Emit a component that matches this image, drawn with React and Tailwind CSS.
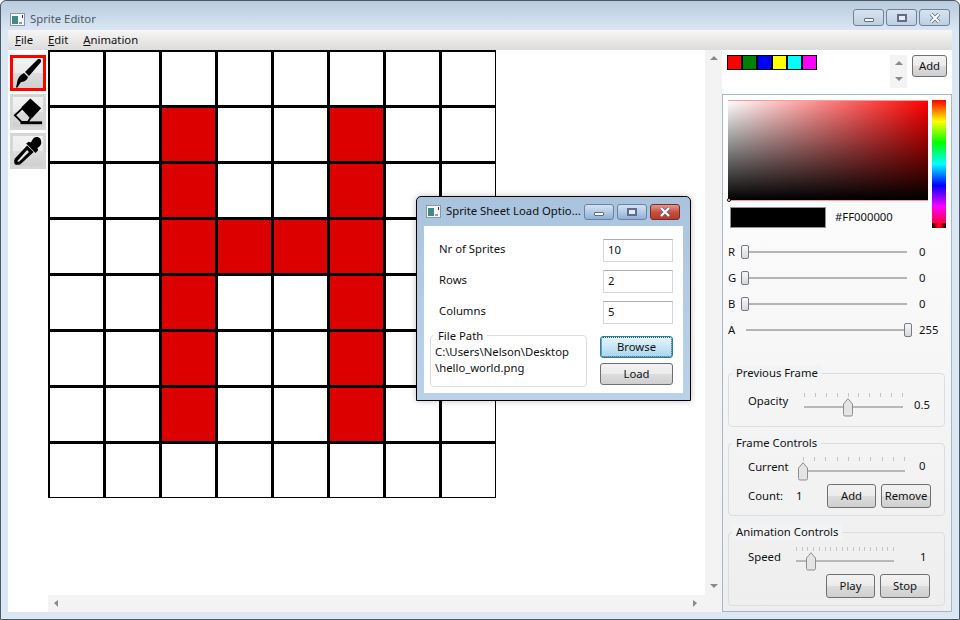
const filled = new Set([
  '1,2', '1,5', '2,2', '2,5', '3,2', '3,3', '3,4', '3,5',
  '4,2', '4,5', '5,2', '5,5', '6,2', '6,5',
])

const swatches = ['bg-[#ff0000]', 'bg-[#008000]', 'bg-[#0000ff]', 'bg-[#ffff00]', 'bg-[#00ffff]', 'bg-[#ff00ff]']

function AppIcon() {
  return (
    <svg width="15" height="13" viewBox="0 0 15 13" className="shrink-0">
      <rect x="0.5" y="0.5" width="14" height="12" fill="#f4f6f8" stroke="#8a96a4" />
      <rect x="2" y="3" width="6" height="8" fill="#3f8a86" />
      <rect x="9" y="9" width="3" height="2" fill="#8fa0b0" />
      <rect x="12" y="2" width="1" height="3" fill="#333" />
    </svg>
  )
}

function CaptionButtons({ dialog }) {
  const base = 'flex items-center justify-center border rounded-[3px] border-[#6d82a0]'
  const glass = dialog
    ? 'bg-gradient-to-b from-[#d4e2f2] via-[#b3cbe6] to-[#8fb0d6]'
    : 'bg-gradient-to-b from-[#d8e3ef] to-[#bfcfe0]'
  const size = dialog ? 'w-[30px] h-[16px]' : 'w-[31px] h-[17px]'
  return (
    <div className={`flex ${dialog ? 'gap-[3px]' : 'gap-[2px]'}`}>
      <div className={`${base} ${glass} ${size}`}>
        <div className="w-[10px] h-[4px] mt-[4px] bg-white border border-[#5d6f88] rounded-[1px]" />
      </div>
      <div className={`${base} ${glass} ${size}`}>
        <div className="w-[10px] h-[8px] border-2 border-[#5d6f88] bg-[#e6edf5]" />
      </div>
      <div
        className={`${base} ${size} ${dialog ? 'bg-gradient-to-b from-[#e09a90] via-[#c9503f] to-[#b53a2c] border-[#7a2a22]' : glass}`}
      >
        <svg width="12" height="10" viewBox="0 0 12 10">
          <path d="M2 1 L10 9 M10 1 L2 9" stroke="#5d6f88" strokeWidth="3.6" />
          <path d="M2 1 L10 9 M10 1 L2 9" stroke="#fff" strokeWidth="2" />
        </svg>
      </div>
    </div>
  )
}

function ToolButton({ active, children }) {
  return (
    <div
      className={`relative w-9 h-9 flex items-center justify-center ${
        active ? 'border-[3px] border-[#ff0000]' : 'border-[3px] border-[#d6d6d6]'
      } bg-[linear-gradient(#f2f2f2_0%,#ebebeb_50%,#dddddd_50%,#cfcfcf_100%)]`}
    >
      {children}
    </div>
  )
}

function Brush() {
  return (
    <svg width="28" height="30" viewBox="0 0 28 30">
      <path d="M26 1 L27 2 L27 4 L15 18 L11 14 L24 1 Z" fill="#000" />
      <path d="M10 15 L14 19 C13 23 9 24 7 24 L3 30 L2 29 C3 26 3 23 4 21 C5 18 8 16 10 15 Z" fill="#000" />
    </svg>
  )
}

function Eraser() {
  return (
    <svg width="32" height="30" viewBox="0 0 32 30">
      <path d="M18.5 0.7 L30 11 L20 22 L9 10 Z" fill="#000" />
      <path d="M10 11 L19 21 L16 25.5 L9 25.5 L2 18.5 Z" fill="none" stroke="#000" strokeWidth="2" />
      <rect x="8" y="25" width="23" height="3" fill="#000" />
    </svg>
  )
}

function Dropper() {
  return (
    <svg width="32" height="32" viewBox="0 0 32 32">
      <path d="M22 2 C25 0 30 1 30 6 C31 9 28 11 26 13 L27 15 L24 18 L14 8 L17 6 L19 7 Z" fill="#000" />
      <path d="M15 10 L22 17 L8 30 C6 31 3 31 2 30 C1 28 1 26 2 24 Z" fill="#000" />
      <path d="M15 15 L17 17 L7 27 C6 27.5 5 27.5 4.5 27 Z" fill="#e4e4e4" />
    </svg>
  )
}

function Arrow({ dir, className }) {
  const paths = {
    up: 'M0 5 L4 1 L8 5 Z',
    down: 'M0 1 L8 1 L4 5 Z',
    left: 'M1 3 L5 0 L5 7 Z',
    right: 'M5 3 L1 0 L1 7 Z',
  }
  return (
    <svg width="8" height="7" viewBox="0 0 8 7" className={className}>
      <path d={paths[dir]} fill="#8a8a8a" />
    </svg>
  )
}

function Grid() {
  const cells = []
  for (let r = 0; r < 8; r++) {
    for (let c = 0; c < 8; c++) {
      cells.push(
        <div key={`${r},${c}`} className={filled.has(`${r},${c}`) ? 'bg-[#dd0000]' : 'bg-white'} />
      )
    }
  }
  return (
    <div className="grid grid-cols-[repeat(8,53px)] grid-rows-[repeat(8,53px)] gap-[3px] w-[448px] h-[448px] pl-[1.5px] pt-[1.5px] bg-black">
      {cells}
    </div>
  )
}

function Button({ w, h = 'h-[24px]', focused, children }) {
  return (
    <div
      className={`${w} ${h} flex items-center justify-center rounded-[3px] border text-[11.3px] ${
        focused
          ? 'border-[#2c7ea8] bg-gradient-to-b from-[#e6f4fb] via-[#c9e6f5] to-[#a8d6ee] outline-1 outline-dotted -outline-offset-2 outline-[#33566a]'
          : 'border-[#707070] bg-[linear-gradient(#f2f2f2_0%,#ebebeb_50%,#dddddd_50%,#cfcfcf_100%)]'
      }`}
    >
      {children}
    </div>
  )
}

function ColorSlider({ label, value, pos }) {
  return (
    <div className="flex items-center h-[26px]">
      <span className="w-[13px] text-[11.3px]">{label}</span>
      <div className="relative w-[171px] h-[14px] flex items-center">
        <div className="w-full h-[2px] bg-[#b4b4b4] mx-[5px]" />
        <div
          className={`absolute top-0 ${pos} w-[8px] h-[14px] rounded-[2px] border border-[#707a88] bg-gradient-to-b from-[#f8f8f8] to-[#d8d8d8]`}
        />
      </div>
      <span className="ml-[7px] text-[11.3px]">{value}</span>
    </div>
  )
}

function Ticks({ count, className }) {
  return (
    <div className={`flex justify-between ${className}`}>
      {Array.from({ length: count }).map((_, i) => (
        <div key={i} className="w-px h-[4px] bg-[#c4c4c4]" />
      ))}
    </div>
  )
}

function TickSlider({ w, count, thumb, tickClass = '' }) {
  return (
    <div className={`relative ${w} h-[22px]`}>
      <Ticks count={count} className={tickClass} />
      <div className="absolute left-0 right-0 top-[13px] h-[2px] bg-[#b8b8b8]" />
      <svg width="10" height="19" viewBox="0 0 10 19" className={`absolute top-[5px] ${thumb}`}>
        <path
          d="M0.5 6 L5 0.7 L9.5 6 L9.5 16.5 Q9.5 18 8 18 L2 18 Q0.5 18 0.5 16.5 Z"
          fill="#e4e4e4"
          stroke="#8a8f96"
        />
      </svg>
    </div>
  )
}

function Group({ title, h, children }) {
  return (
    <div className={`relative ${h} border border-[#d5dfe5] rounded-[4px]`}>
      <span className="absolute -top-[9px] left-[3px] px-[4px] bg-[#f1f3f4] text-[11.3px] leading-[16px] whitespace-nowrap">
        {title}
      </span>
      {children}
    </div>
  )
}

function Dialog() {
  const rows = [
    ['Nr of Sprites', '10'],
    ['Rows', '2'],
    ['Columns', '5'],
  ]
  return (
    <div className="absolute left-[415px] top-[195px] w-[275px] h-[205px] flex flex-col border border-black rounded-t-[5px] bg-gradient-to-b from-[#a9c3de] via-[#b4cde6] to-[#b9d2ea] shadow-[0_0_6px_rgba(0,0,0,0.25)] px-[7px] pb-[7px]">
      <div className="h-[29px] flex items-center pl-[2px] shrink-0">
        <AppIcon />
        <span className="ml-[5px] w-[138px] text-[11.3px] text-[#101010] whitespace-nowrap">
          Sprite Sheet Load Optio...
        </span>
        <CaptionButtons dialog />
      </div>
      <div className="flex-1 bg-white pl-[15px] pr-[10px] pt-[13px]">
        <div className="flex flex-col gap-[8px]">
          {rows.map(([label, value]) => (
            <div key={label} className="flex items-center justify-between h-[23px]">
              <span className="text-[11.3px] -mt-[2px]">{label}</span>
              <div className="w-[70px] h-[23px] border border-[#d2d8de] border-t-[#abadb3] flex items-center pl-[4px] text-[11.3px]">
                {value}
              </div>
            </div>
          ))}
        </div>
        <div className="flex justify-between mt-[11px] -ml-[9px]">
          <div className="relative w-[157px] h-[52px] border border-[#d5dfe5] rounded-[4px] text-[11.3px] leading-[16px] pl-[4px] pt-[8px]">
            <span className="absolute -top-[8px] left-[3px] px-[4px] bg-white">File Path</span>
            C:\Users\Nelson\Desktop
            <br />
            \hello_world.png
          </div>
          <div className="flex flex-col gap-[5px] mt-[1px]">
            <Button w="w-[73px]" h="h-[22px]" focused>Browse</Button>
            <Button w="w-[73px]" h="h-[22px]">Load</Button>
          </div>
        </div>
      </div>
    </div>
  )
}

function RightPanel() {
  return (
    <div className="w-[230px] h-full flex flex-col bg-white">
      <div className="h-[44px] flex items-start pt-[5px] pl-[5px]">
        <div className="flex">
          {swatches.map((s) => (
            <div key={s} className={`w-[15px] h-[15px] border border-black ${s}`} />
          ))}
        </div>
        <div className="ml-[73px] w-[17px] h-[33px] bg-[#f3f3f3] flex flex-col items-center justify-between py-[5px]">
          <Arrow dir="up" />
          <Arrow dir="down" />
        </div>
        <Button w="w-[35px] ml-[5px]" h="h-[22px]">Add</Button>
      </div>
      <div className="flex-1 border border-[#a9b6c4] bg-gradient-to-b from-white to-[#eeeeee] pl-[5px] pr-[5px] pt-[5px] flex flex-col">
        <div className="flex">
          <div className="w-[204px]">
            <div className="relative w-[200px] h-[101px] border-t border-b border-[#f4a0a0] bg-[linear-gradient(to_top,#000,transparent),linear-gradient(to_right,#fff,#ff0000)]">
              <div className="absolute -left-[1px] -bottom-[2px] w-[4px] h-[4px] rounded-full bg-white border border-black" />
            </div>
            <div className="flex items-center mt-[6px] ml-[2px]">
              <div className="w-[96px] h-[21px] bg-black border border-[#909090]" />
              <span className="ml-[9px] text-[11.3px]">#FF000000</span>
            </div>
          </div>
          <div className="relative w-[14px] h-[128px] bg-[linear-gradient(#ff0000,#ffff00,#00ff00,#00ffff,#0000ff,#ff00ff,#ff0000)]">
            <div className="absolute bottom-0 left-0 right-0 h-[5px] bg-[linear-gradient(to_right,#000,transparent_40%,transparent_60%,#000)]" />
          </div>
        </div>
        <div className="flex flex-col mt-[11px]">
          <ColorSlider label="R" value="0" pos="left-0" />
          <ColorSlider label="G" value="0" pos="left-0" />
          <ColorSlider label="B" value="0" pos="left-0" />
          <ColorSlider label="A" value="255" pos="left-[163px]" />
        </div>
        <div className="flex flex-col gap-[16px] mt-[30px] mr-[1px]">
          <Group title="Previous Frame" h="h-[54px]">
            <div className="flex pt-[19px] pl-[19px]">
              <span className="text-[11.3px] leading-[16px] w-[56px]">Opacity</span>
              <TickSlider w="w-[99px]" count={10} thumb="left-[39px]" />
              <span className="ml-[11px] mt-[4px] text-[11.3px] leading-[16px]">0.5</span>
            </div>
          </Group>
          <Group title="Frame Controls" h="h-[73px]">
            <div className="flex pt-[13px] pl-[19px]">
              <span className="text-[11.3px] leading-[16px] mt-[2px] w-[50px]">Current</span>
              <TickSlider w="w-[107px]" count={10} thumb="left-0" tickClass="pl-[5px]" />
              <span className="ml-[14px] mt-[1px] text-[11.3px] leading-[16px]">0</span>
            </div>
            <div className="flex items-center pl-[19px] mt-[5px]">
              <span className="text-[11.3px] w-[48px]">Count:</span>
              <span className="text-[11.3px] w-[31px]">1</span>
              <Button w="w-[49px]">Add</Button>
              <Button w="w-[50px] ml-[5px]">Remove</Button>
            </div>
          </Group>
          <Group title="Animation Controls" h="h-[74px]">
            <div className="flex pt-[14px] pl-[19px]">
              <span className="text-[11.3px] leading-[16px] mt-[2px] w-[48px]">Speed</span>
              <TickSlider w="w-[98px]" count={18} thumb="left-[10px]" />
              <span className="ml-[26px] mt-[2px] text-[11.3px] leading-[16px]">1</span>
            </div>
            <div className="flex justify-end pr-[14px] gap-[5px] mt-[5px]">
              <Button w="w-[49px]" h="h-[24px]">Play</Button>
              <Button w="w-[50px]" h="h-[24px]">Stop</Button>
            </div>
          </Group>
        </div>
      </div>
    </div>
  )
}

export default function App() {
  return (
    <div className="relative w-[960px] h-[620px] overflow-hidden flex flex-col border border-[#4c5a68] rounded-t-[6px] px-[7px] pb-[7px] bg-[linear-gradient(#b9cbde_0px,#dbe7f3_30px,#dbe7f3_100%)] text-[#111] font-['Noto_Sans',sans-serif]">
      {/* Title bar */}
      <div className="h-[29px] flex items-center pt-[8px] shrink-0">
        <div className="ml-[2px]"><AppIcon /></div>
        <span className="ml-[5px] text-[11.3px] text-[#4d5a68]">Sprite Editor</span>
        <div className="ml-auto mr-[2px] -mt-[4px]"><CaptionButtons /></div>
      </div>

      {/* Menu */}
      <div className="h-[20px] flex items-center gap-[15px] pl-[7px] pt-[1px] text-[11.3px] bg-gradient-to-b from-[#f6f6f6] to-[#dedcda] shrink-0">
        <span><u>F</u>ile</span>
        <span><u>E</u>dit</span>
        <span><u>A</u>nimation</span>
      </div>

      {/* Body */}
      <div className="flex-1 flex bg-white min-h-0">
        <div className="w-[40px] flex flex-col gap-[3px] pt-[5px] pl-[2px] shrink-0">
          <ToolButton active><Brush /></ToolButton>
          <ToolButton><Eraser /></ToolButton>
          <ToolButton><Dropper /></ToolButton>
        </div>
        <div className="w-[657px] flex flex-col">
          <div className="flex-1"><Grid /></div>
          <div className="h-[17px] bg-[#f3f3f3] flex items-center justify-between px-[5px]">
            <Arrow dir="left" />
            <Arrow dir="right" />
          </div>
        </div>
        <div className="w-[17px] bg-[#f3f3f3] flex flex-col items-center justify-between pt-[5px] pb-[22px]">
          <Arrow dir="up" />
          <Arrow dir="down" />
        </div>
        <RightPanel />
      </div>

      <Dialog />
    </div>
  )
}
